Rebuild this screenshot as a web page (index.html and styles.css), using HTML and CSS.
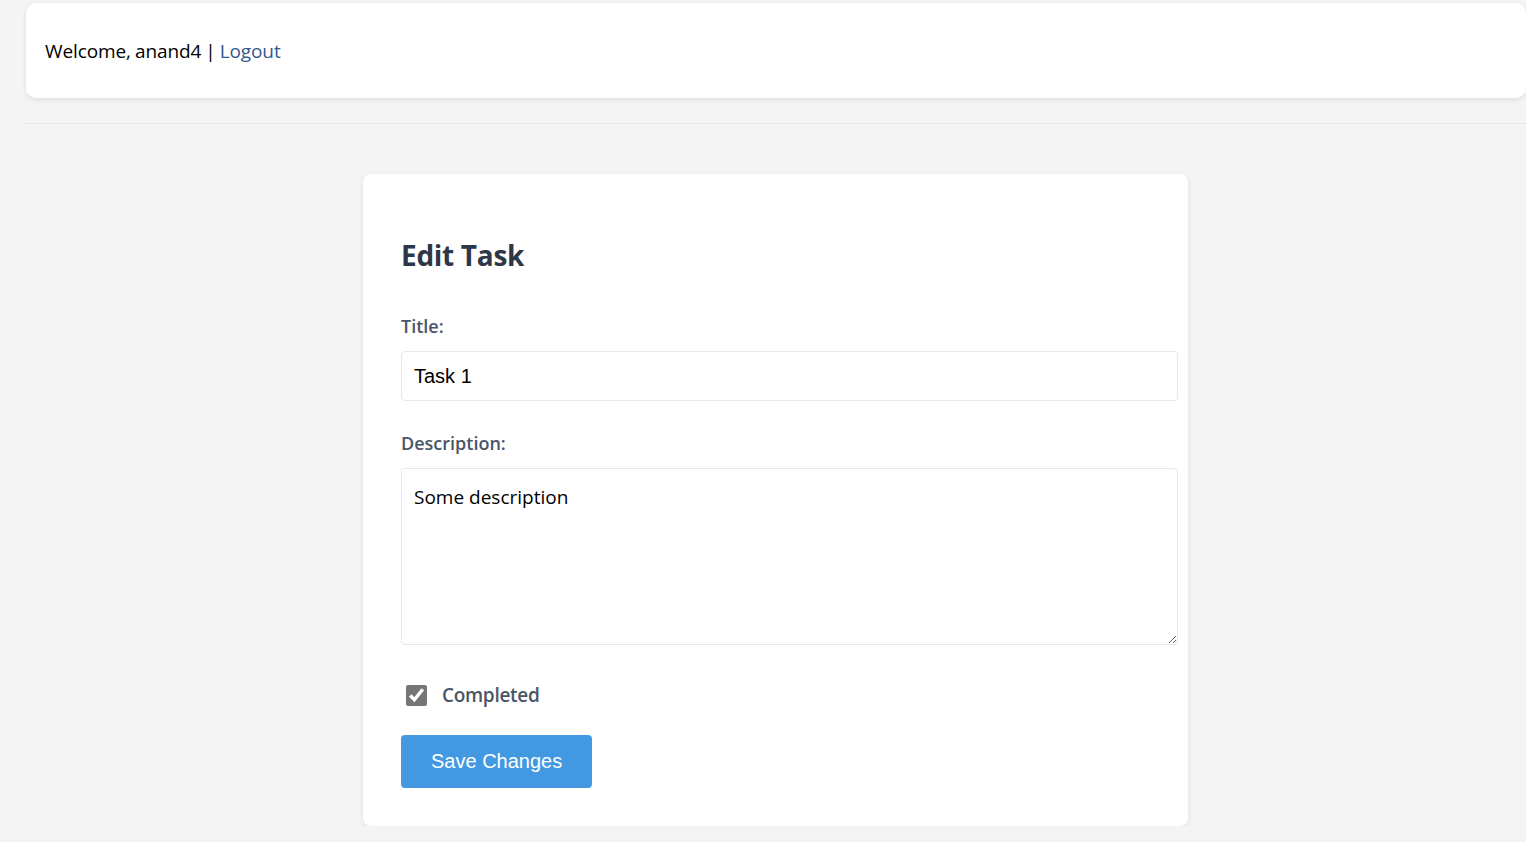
FILE: index.html
```html
<!DOCTYPE html>
<html lang="en">
<head>
<meta charset="utf-8">
<title>Edit Task</title>
<link rel="stylesheet" href="styles.css">
</head>
<body>
<div class="page">
  <header class="topbar">
    <p class="welcome">Welcome, anand4 | <a href="#" class="logout">Logout</a></p>
  </header>
  <hr class="divider">
  <main class="card">
    <h2 class="card-title">Edit Task</h2>
    <form class="task-form">
      <label class="field-label" for="title">Title:</label>
      <input class="text-input" id="title" type="text" value="Task 1">
      <label class="field-label" for="desc">Description:</label>
      <textarea class="text-area" id="desc">Some description</textarea>
      <label class="check-row">
        <input class="check" type="checkbox" checked>
        <span class="check-text">Completed</span>
      </label>
      <button type="button" class="save-btn">Save Changes</button>
    </form>
  </main>
</div>
</body>
</html>
```

FILE: styles.css
```css
html, body {
  margin: 0;
  padding: 0;
}
body {
  background: #f4f4f4;
  font-family: "Open Sans", "Noto Sans", sans-serif;
  overflow: hidden;
}
.page {
  width: 1500px;
  margin-left: 26px;
  padding-top: 3px;
}
.topbar {
  height: 95px;
  background: #fff;
  border-radius: 10px;
  box-shadow: 0 2px 5px rgba(0, 0, 0, 0.09);
  display: flex;
  align-items: center;
  padding: 0 19px;
  box-sizing: border-box;
}
.welcome {
  margin: 0;
  font-size: 19px;
  color: #000;
  letter-spacing: -0.1px;
  word-spacing: -0.8px;
}
.logout {
  color: #34598f;
  text-decoration: none;
}
.divider {
  margin: 25px 0 0;
  border: 0;
  border-top: 1px solid #e2e8f0;
  height: 0;
}
.card {
  width: 825px;
  box-sizing: border-box;
  margin: 50px 0 0 337px;
  background: #fff;
  border-radius: 8px;
  box-shadow: 0 2px 6px rgba(0, 0, 0, 0.08);
  padding: 38px;
}
.card-title {
  margin: 23px 0 0;
  font-size: 28px;
  line-height: 40px;
  font-weight: 700;
  color: #2d3748;
  letter-spacing: -0.3px;
}
.task-form {
  display: flex;
  flex-direction: column;
  align-items: flex-start;
}
.field-label {
  font-size: 18px;
  line-height: 24px;
  font-weight: 600;
  color: #4a5568;
  margin-top: 39px;
  margin-bottom: 13px;
}
.text-input + .field-label {
  margin-top: 30px;
}
.text-input,
.text-area {
  display: block;
  width: 100%;
  box-sizing: content-box;
  border: 1px solid #e2e8f0;
  border-radius: 4px;
  padding: 12px 14px 12px 12px;
  margin: 0;
  background: #fff;
  color: #000;
  outline: none;
}
.text-input {
  font-family: "Liberation Sans", Arial, sans-serif;
  font-size: 20px;
  line-height: 24px;
  height: 24px;
}
.text-area {
  font-family: "Open Sans", "Noto Sans", sans-serif;
  font-size: 19px;
  line-height: 27px;
  padding-top: 15px;
  height: 148px;
  resize: vertical;
}
.check-row {
  display: flex;
  align-items: center;
  height: 28px;
  margin-top: 36px;
  margin-bottom: -1px;
}
.check {
  width: 21px;
  height: 21px;
  margin: 0 15px 0 5px;
  accent-color: #767676;
}
.check-text {
  font-size: 19px;
  line-height: 28px;
  font-weight: 600;
  letter-spacing: -0.3px;
  color: #4a5568;
}
.save-btn {
  margin-top: 27px;
  height: 53px;
  padding: 0 30px;
  background: #4299e1;
  color: #fff;
  border: 0;
  border-radius: 4px;
  font-family: "Liberation Sans", Arial, sans-serif;
  font-size: 20px;
  line-height: 23px;
  cursor: pointer;
}
```
